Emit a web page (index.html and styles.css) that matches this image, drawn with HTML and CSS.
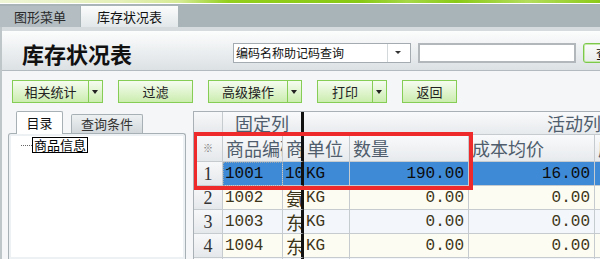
FILE: index.html
```html
<!DOCTYPE html>
<html lang="zh-CN">
<head>
    <meta charset="UTF-8">
    <meta name="viewport" content="width=device-width, initial-scale=1.0">
    <title>库存状况表</title>
    <link rel="stylesheet" href="styles.css">
</head>
<body>
    <div class="top-strip"></div>
    <div class="tab-bar">
        <div class="tab">图形菜单</div>
        <div class="tab tab-active">库存状况表</div>
    </div>

    <div class="window">
        <div class="header">
            <h1 class="title">库存状况表</h1>
            <div class="combo">
                <span class="combo-text">编码名称助记码查询</span>
                <span class="combo-arrow"></span>
            </div>
            <input class="search" type="text">
            <button class="query" type="button">查询</button>
        </div>

        <div class="toolbar">
            <div class="btn btn-stats"><span class="btn-main">相关统计</span><span class="btn-drop"></span></div>
            <div class="btn btn-filter"><span class="btn-main">过滤</span></div>
            <div class="btn btn-advanced"><span class="btn-main">高级操作</span><span class="btn-drop"></span></div>
            <div class="btn btn-print"><span class="btn-main">打印</span><span class="btn-drop"></span></div>
            <div class="btn btn-back"><span class="btn-main">返回</span></div>
        </div>

        <div class="main">
            <div class="side">
                <div class="side-tabs">
                    <div class="side-tab side-tab-active">目录</div>
                    <div class="side-tab side-tab-query">查询条件</div>
                </div>
                <div class="side-panel">
                    <div class="tree-item">
                        <span class="tree-dots"></span>
                        <span class="tree-label">商品信息</span>
                    </div>
                </div>
            </div>

            <div class="grid">
                <table class="sheet">
                    <colgroup>
                        <col class="c-ind">
                        <col class="c-code">
                        <col class="c-name">
                        <col class="c-unit">
                        <col class="c-qty">
                        <col class="c-cost">
                        <col class="c-rest">
                    </colgroup>
                    <tr class="band">
                        <td class="ind"></td>
                        <td class="band-fixed fix-edge" colspan="2">固定列</td>
                        <td class="band-active" colspan="4">活动列</td>
                    </tr>
                    <tr class="head">
                        <td class="ind star">※</td>
                        <td>商品编码</td>
                        <td class="fix-edge">商品名称</td>
                        <td>单位</td>
                        <td>数量</td>
                        <td>成本均价</td>
                        <td>库存金额</td>
                    </tr>
                    <tr class="row sel">
                        <td class="ind">1</td>
                        <td class="num-l focus">1001</td>
                        <td class="num-l fix-edge">1001</td>
                        <td class="num-l">KG</td>
                        <td class="num">190.00</td>
                        <td class="num">16.00</td>
                        <td class="num"></td>
                    </tr>
                    <tr class="row odd">
                        <td class="ind">2</td>
                        <td class="num-l">1002</td>
                        <td class="name fix-edge">氨基酸</td>
                        <td class="num-l">KG</td>
                        <td class="num">0.00</td>
                        <td class="num">0.00</td>
                        <td class="num"></td>
                    </tr>
                    <tr class="row even">
                        <td class="ind">3</td>
                        <td class="num-l">1003</td>
                        <td class="name fix-edge">东北大米</td>
                        <td class="num-l">KG</td>
                        <td class="num">0.00</td>
                        <td class="num">0.00</td>
                        <td class="num"></td>
                    </tr>
                    <tr class="row odd">
                        <td class="ind">4</td>
                        <td class="num-l">1004</td>
                        <td class="name fix-edge">东北黄豆</td>
                        <td class="num-l">KG</td>
                        <td class="num">0.00</td>
                        <td class="num">0.00</td>
                        <td class="num"></td>
                    </tr>
                    <tr class="row even">
                        <td class="ind">5</td>
                        <td class="num-l">1005</td>
                        <td class="name fix-edge">东北绿豆</td>
                        <td class="num-l">KG</td>
                        <td class="num">0.00</td>
                        <td class="num">0.00</td>
                        <td class="num"></td>
                    </tr>
                </table>
                <div class="mark"></div>
            </div>
        </div>
    </div>
</body>
</html>
```

FILE: styles.css
```css
* {
    box-sizing: border-box;
}

html,
body {
    margin: 0;
    padding: 0;
}

body {
    width: 600px;
    height: 259px;
    overflow: hidden;
    font-family: "Noto Sans CJK SC", sans-serif;
    font-size: 13px;
    color: #222;
    background-color: #f4f6f8;
}

/* top strip and page tabs */
.top-strip {
    height: 4px;
    border-bottom: 1px solid #fff;
    background: linear-gradient(to right, #eef5d6 0%, #e4f0b8 20%, #d6eb94 30%, #93cf1c 38%, #88c914 60%, #a6d846 68%, #8aca16 76%, #b4dd5c 88%, #8cca18 100%);
}

.tab-bar {
    display: flex;
    height: 23px;
    padding-top: 2px;
    background-color: #a9b4b9;
}

.tab {
    width: 80px;
    height: 21px;
    margin-right: 1px;
    line-height: 21px;
    text-align: center;
    color: #2a2a2a;
    background-color: #b3bdc2;
}

.tab-active {
    width: 97px;
    color: #111;
    background: linear-gradient(#fbfcfc, #e2e7e9);
}

/* window */
.window {
    border-left: 2px solid #bfc6ca;
}

.header {
    display: flex;
    align-items: center;
    height: 44px;
    padding: 5px 0 0 20px;
    border-top: 4px solid #d6dbde;
    border-bottom: 1px solid #b4bbc0;
    background: linear-gradient(#fcfdfd, #dce1e4);
}

.header > * {
    flex: none;
}

.title {
    width: 211px;
    margin: 0;
    font-size: 22px;
    font-weight: bold;
    line-height: 1;
    color: #111;
}

.combo {
    display: flex;
    width: 178px;
    height: 20px;
    border: 1px solid #a4acb1;
    background-color: #fff;
}

.combo-text {
    flex: 1;
    padding-left: 2px;
    font-size: 12px;
    line-height: 18px;
    color: #111;
}

.combo-arrow {
    position: relative;
    width: 23px;
    border-left: 1px solid #d3d8db;
}

.combo-arrow::after {
    content: "";
    position: absolute;
    left: 7px;
    top: 7px;
    border-left: 3px solid transparent;
    border-right: 3px solid transparent;
    border-top: 3px solid #333;
}

.search {
    width: 158px;
    height: 20px;
    margin: 0 0 0 7px;
    border: 2px solid #b1b7bb;
    background-color: #fff;
}

.query {
    height: 20px;
    margin-left: 7px;
    padding: 0 12px;
    border: 1px solid #7cc84a;
    border-radius: 3px;
    box-shadow: inset 0 0 0 1px #c4e9a8;
    font-family: "Noto Sans CJK SC", sans-serif;
    font-size: 13px;
    line-height: 16px;
    white-space: nowrap;
    color: #111;
    background: linear-gradient(#fbfcfb, #e8ecea);
}

/* toolbar */
.toolbar {
    display: flex;
    gap: 15px;
    height: 40px;
    padding: 9px 0 0 10px;
}

.btn {
    display: flex;
    flex: none;
    height: 23px;
    border: 1px solid #86cd55;
    background: linear-gradient(#f6fcf0, #cbedaf);
}

.btn-main {
    flex: 1;
    line-height: 21px;
    text-align: center;
    color: #222;
}

.btn-drop {
    position: relative;
    width: 14px;
    border-left: 1px solid #86cd55;
}

.btn-drop::after {
    content: "";
    position: absolute;
    left: 3px;
    top: 9px;
    border-left: 3px solid transparent;
    border-right: 3px solid transparent;
    border-top: 4px solid #222;
}

.btn-stats {
    width: 91px;
}

.btn-filter {
    width: 75px;
}

.btn-advanced {
    width: 94px;
}

.btn-print {
    width: 70px;
}

.btn-back {
    width: 55px;
}

/* main area */
.main {
    display: flex;
    height: 148px;
}

.side {
    display: flex;
    flex: none;
    flex-direction: column;
    width: 191px;
    padding: 0 7px 0 6px;
}

.side-tabs {
    display: flex;
    align-items: flex-end;
    height: 22px;
    padding-left: 8px;
}

.side-tab {
    position: relative;
    height: 19px;
    margin-right: 8px;
    border: 1px solid #a7b0b5;
    border-bottom: none;
    border-radius: 2px 2px 0 0;
    line-height: 18px;
    text-align: center;
    color: #333;
    background: linear-gradient(#eef1f2, #d1d7da);
}

.side-tab-active {
    width: 47px;
    height: 23px;
    margin-bottom: -1px;
    z-index: 1;
    line-height: 21px;
    color: #111;
    background: #fff;
}

.side-tab-query {
    width: 72px;
}

.side-panel {
    flex: 1;
    padding: 3px 0 0 12px;
    border: 1px solid #a7b0b5;
    border-bottom: none;
    border-radius: 3px 3px 0 0;
    box-shadow: inset 0 0 0 2px #eef1f3;
    background-color: #fff;
}

.tree-item {
    display: flex;
    align-items: center;
}

.tree-dots {
    width: 11px;
    border-top: 1px dotted #666;
}

.tree-label {
    height: 16px;
    padding: 0 1px;
    border: 1px solid #000;
    line-height: 13px;
    color: #000;
}

/* data grid */
.grid {
    position: relative;
    flex: 1;
    overflow: hidden;
    border-left: 1px solid #a9b1b6;
    border-top: 1px solid #a9b1b6;
    background-color: #fff;
}

.sheet {
    width: 700px;
    border-collapse: separate;
    border-spacing: 0;
    table-layout: fixed;
}

.c-ind { width: 29px; }
.c-code { width: 60px; }
.c-name { width: 21px; }
.c-unit { width: 46px; }
.c-qty { width: 119px; }
.c-cost { width: 126px; }
.c-rest { width: 299px; }

.sheet td {
    padding: 0 3px;
    border-right: 1px solid #c6cbd0;
    border-bottom: 1px solid #c6cbd0;
    overflow: hidden;
    white-space: nowrap;
    line-height: 1;
}

.sheet td.fix-edge {
    border-right: 3px solid #111;
}

.band td,
.head td {
    font-size: 18px;
    color: #4f5d6c;
    background: linear-gradient(#f9fafb, #e7eaed);
}

.band td {
    height: 23px;
}

.head td {
    height: 27px;
}

.band-fixed {
    text-align: center;
}

.sheet td.band-active {
    padding-left: 243px;
}

.sheet td.ind {
    padding: 0;
    text-align: center;
    font-family: "Liberation Serif", serif;
    font-size: 18px;
    color: #333;
    background: linear-gradient(#f7f8f9, #e5e8eb);
}

.sheet td.star {
    font-family: "Noto Sans CJK SC", sans-serif;
    font-size: 10px;
    color: #777;
}

.row td {
    height: 24px;
    font-size: 18px;
    color: #3d3519;
}

.odd td {
    background-color: #fdfcf2;
}

.even td {
    background-color: #f3f6fa;
}

.sel td {
    color: #0c0c0c;
    background-color: #3f8ad7;
}

.sheet td.num,
.sheet td.num-l {
    font-family: "Liberation Mono", monospace;
    font-size: 16px;
}

.sheet td.num {
    padding-right: 4px;
    text-align: right;
}

.sheet td.num-l {
    padding-left: 2px;
}

.sheet td.focus {
    outline: 1px dotted #9aa6b0;
    outline-offset: -1px;
}

.mark {
    position: absolute;
    left: -1px;
    top: 20px;
    width: 280px;
    height: 58px;
    border: 4px solid #ee2a2a;
}
```
